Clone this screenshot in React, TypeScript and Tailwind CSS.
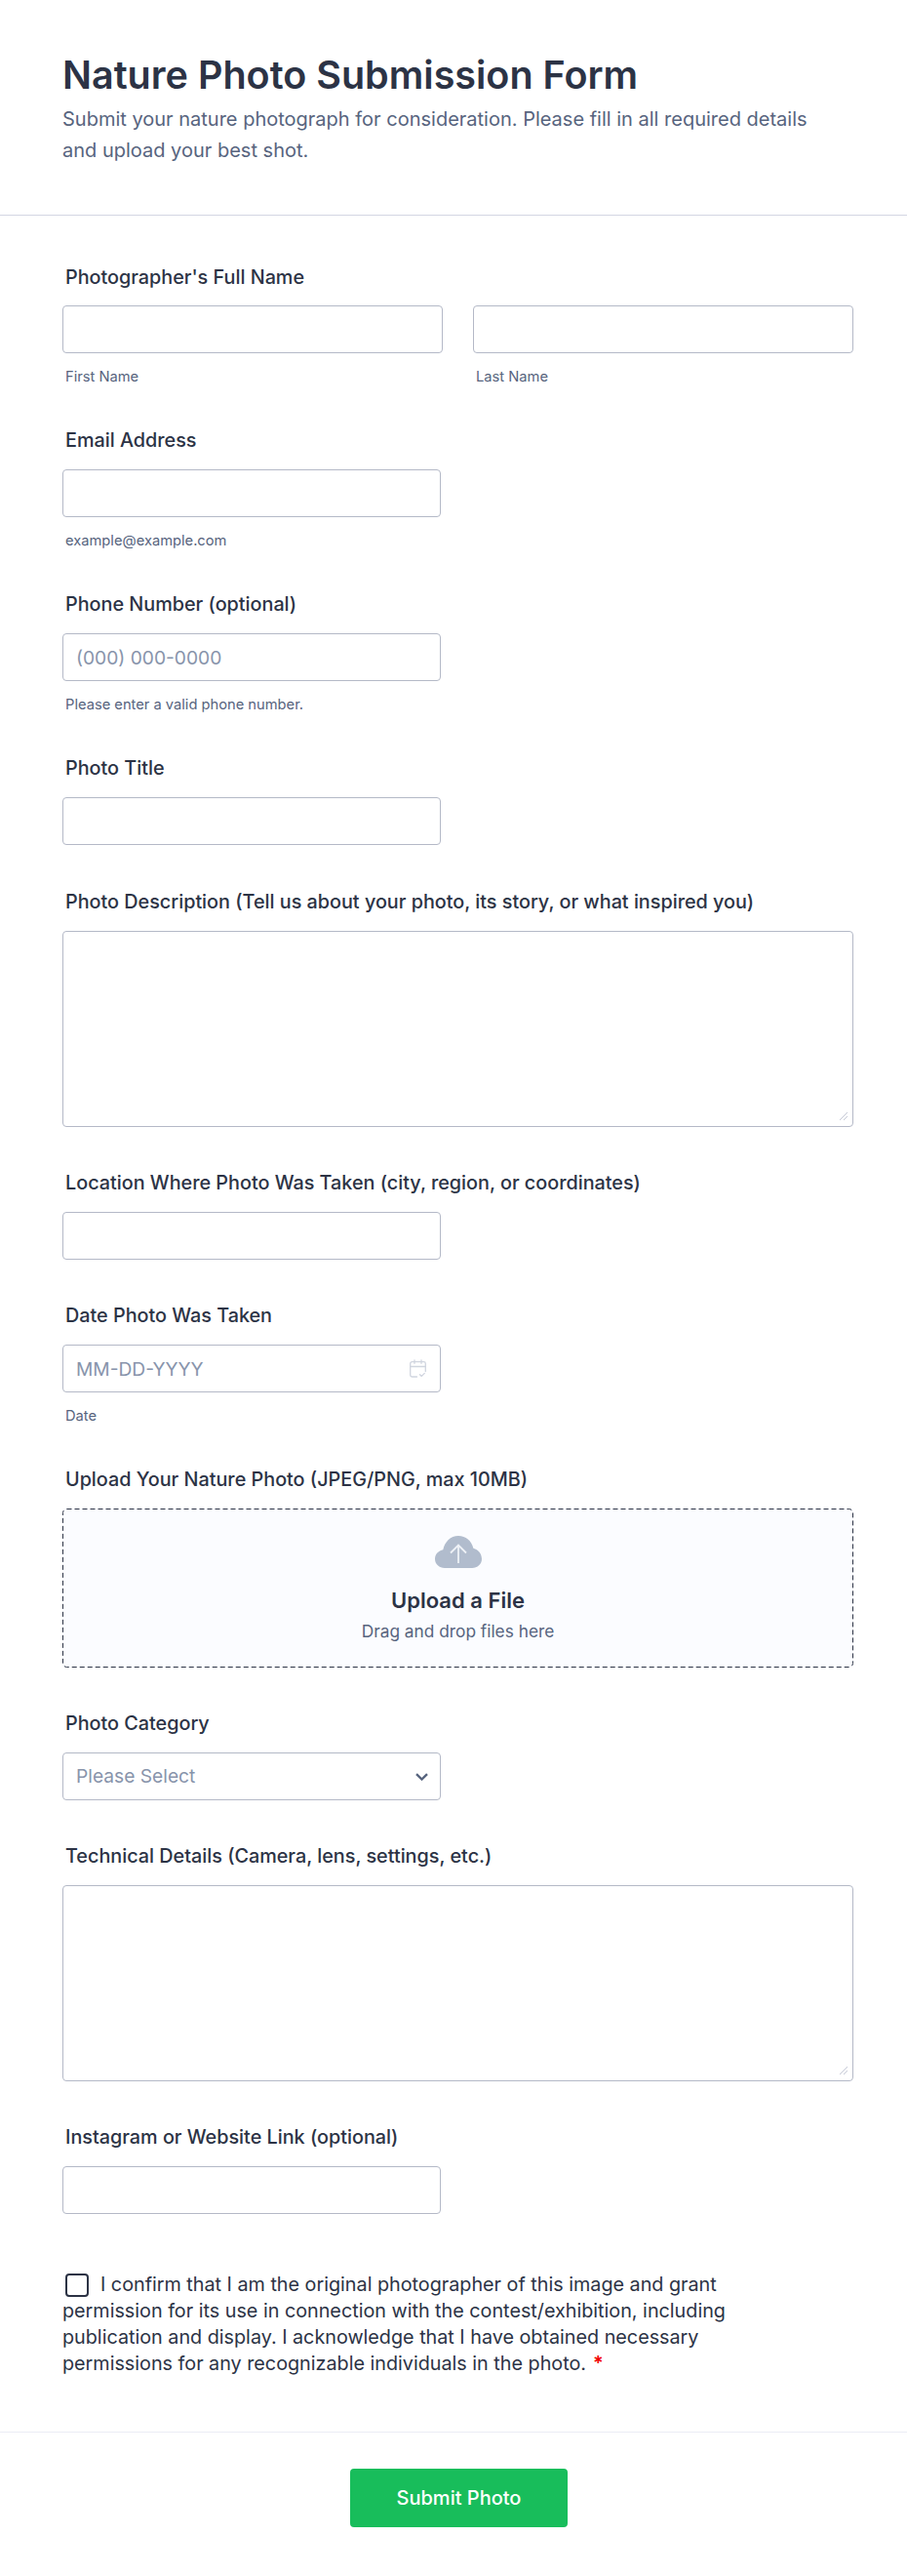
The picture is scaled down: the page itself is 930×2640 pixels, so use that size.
import type { ReactNode } from "react";

const inputClass =
	"block h-[49px] w-full rounded-[4px] border border-[#b4b9c7] bg-white px-[13px] text-[19.2px] text-[#2c3345] outline-none placeholder:text-[#8894ab]";

function Label({ children }: { children: ReactNode }) {
	return <label className="block h-5 pl-[3px] text-[19.8px] leading-5 font-[450] text-[#2c3345]">{children}</label>;
}

function Sub({ children }: { children: ReactNode }) {
	return <div className="mt-[15px] h-[18px] pl-[3px] text-[14.7px] leading-[18px] text-[#57647e]">{children}</div>;
}

function Field({
	label,
	sub,
	placeholder,
	className,
}: {
	label: string;
	sub?: string;
	placeholder?: string;
	className: string;
}) {
	return (
		<div className={className}>
			<Label>{label}</Label>
			<div className="mt-5 w-[388px]">
				<input className={inputClass} placeholder={placeholder} />
			</div>
			{sub && <Sub>{sub}</Sub>}
		</div>
	);
}

function TextArea({ label }: { label: string }) {
	return (
		<div className="pb-[47px]">
			<Label>{label}</Label>
			<div className="relative mt-5">
				<textarea className="block h-[201px] w-full resize-none rounded-[4px] border border-[#b4b9c7] bg-white px-3 py-2 outline-none" />
				{/* resize grip */}
				<svg className="absolute right-[6px] bottom-[7px] h-2 w-2" viewBox="0 0 8 8" fill="none" stroke="#c5c9d6" strokeWidth="1">
					<path d="M0 8l8-8M4 8l4-4" />
				</svg>
			</div>
		</div>
	);
}

export default function App() {
	return (
		<div className="min-h-[2640px] bg-white font-['Inter',sans-serif] text-[#2c3345]">
			{/* Header */}
			<header className="h-[221px] border-b border-[#d3d6e3] pt-[52px] pl-16">
				<h1 className="text-[39.5px] leading-[50px] font-semibold">Nature Photo Submission Form</h1>
				<p className="mt-1 w-[800px] text-[20px] leading-8 text-[#57647e]">
					Submit your nature photograph for consideration. Please fill in all required details and upload your best shot.
				</p>
			</header>

			<main className="pt-[53px] pr-[55px] pl-16">
				{/* Full name */}
				<div className="pb-[46px]">
					<Label>Photographer's Full Name</Label>
					<div className="mt-[19px] grid grid-cols-2 gap-[31px]">
						<div>
							<input className={inputClass} />
							<Sub>First Name</Sub>
						</div>
						<div>
							<input className={inputClass} />
							<Sub>Last Name</Sub>
						</div>
					</div>
				</div>

				<Field className="pb-[46px]" label="Email Address" sub="example@example.com" />
				<Field className="pb-[46px]" label="Phone Number (optional)" sub="Please enter a valid phone number." placeholder="(000) 000-0000" />
				<Field className="pb-[48px]" label="Photo Title" />
				<TextArea label="Photo Description (Tell us about your photo, its story, or what inspired you)" />
				<Field className="pb-[47px]" label="Location Where Photo Was Taken (city, region, or coordinates)" />

				{/* Date */}
				<div className="pb-[46px]">
					<Label>Date Photo Was Taken</Label>
					<div className="relative mt-5 w-[388px]">
						<input className={inputClass} placeholder="MM-DD-YYYY" />
						<svg
							className="absolute top-[15px] right-[15px] h-[19px] w-[17px]"
							viewBox="0 0 17 19"
							fill="none"
							stroke="#d0d5df"
							strokeWidth="1.300"
							strokeLinecap="round"
							strokeLinejoin="round"
						>
							<path d="M7.500 18H2.500a1.800 1.800 0 0 1-1.800-1.800V4.500a1.800 1.800 0 0 1 1.800-1.800h12a1.800 1.800 0 0 1 1.800 1.800v8" />
							<path d="M5 .8v3.500M12 .8v3.500M.8 7.500h15.500M10.500 15.800l1.800 1.600 3-3" />
						</svg>
					</div>
					<Sub>Date</Sub>
				</div>

				{/* Upload */}
				<div className="pb-[47px]">
					<Label>Upload Your Nature Photo (JPEG/PNG, max 10MB)</Label>
					<div className="relative mt-5 flex h-[163px] flex-col items-center rounded-[4px] bg-[#fbfcff] pt-7">
						<svg className="absolute inset-0 h-full w-full" fill="none">
							<rect x="0.5" y="0.5" width="810" height="162" rx="4" stroke="#2c3345" strokeDasharray="5 3" />
						</svg>
						<svg className="h-[33px] w-[48px]" viewBox="0 0 48 33">
							<path
								d="M10 33C4.500 33 0 29 0 23.800c0-4.800 3.500-8.600 8.300-9.500C10 6 16 0 24 0c7.500 0 13.500 5 15.400 12.700C44.500 14 48 18.500 48 23.800 48 29 43.500 33 38 33Z"
								fill="#b1bccd"
							/>
							<path d="M24 28V10M16 17.500l8-8 8 8" fill="none" stroke="#eef1f6" strokeWidth="1.800" />
						</svg>
						<div className="mt-[19px] text-[22px] leading-7 font-semibold">Upload a File</div>
						<div className="mt-[6px] text-[17.3px] leading-6 text-[#57647e]">Drag and drop files here</div>
					</div>
				</div>

				{/* Category */}
				<div className="pb-[47px]">
					<Label>Photo Category</Label>
					<div className="relative mt-5 w-[388px]">
						<select className="block h-[49px] w-full appearance-none rounded-[4px] border border-[#b4b9c7] bg-white px-[13px] text-[19.2px] text-[#8894ab] outline-none">
							<option>Please Select</option>
						</select>
						<svg
							className="absolute top-[21px] right-[13px] h-2 w-[13px]"
							viewBox="0 0 13 8"
							fill="none"
							stroke="#57647e"
							strokeWidth="2.400"
						>
							<path d="M1 1.200l5.500 5.300L12 1.200" />
						</svg>
					</div>
				</div>

				<TextArea label="Technical Details (Camera, lens, settings, etc.)" />
				<Field className="pb-[48px]" label="Instagram or Website Link (optional)" />

				{/* Consent */}
				<div className="mt-[11px] w-[710px] text-[19.75px] leading-[27px]">
					<input
						type="checkbox"
						className="mr-3 ml-[3px] inline-block h-6 w-6 appearance-none rounded-[4px] border-2 border-[#2c3345] bg-white align-[-6px]"
					/>
					I confirm that I am the original photographer of this image and grant permission for its use in connection with the contest/exhibition, including publication and display. I acknowledge that I have obtained necessary permissions for any recognizable individuals in the photo.
					<span className="ml-[7px] font-semibold text-[#f20000]">*</span>
				</div>
			</main>

			{/* Footer */}
			<footer className="mt-[56px] flex justify-center border-t border-[#ebecf5] pt-[37px] pl-[11px]">
				<button className="h-[60px] w-[223px] rounded-[4px] bg-[#18bd5b] text-[20px] font-medium text-white">Submit Photo</button>
			</footer>
		</div>
	);
}
